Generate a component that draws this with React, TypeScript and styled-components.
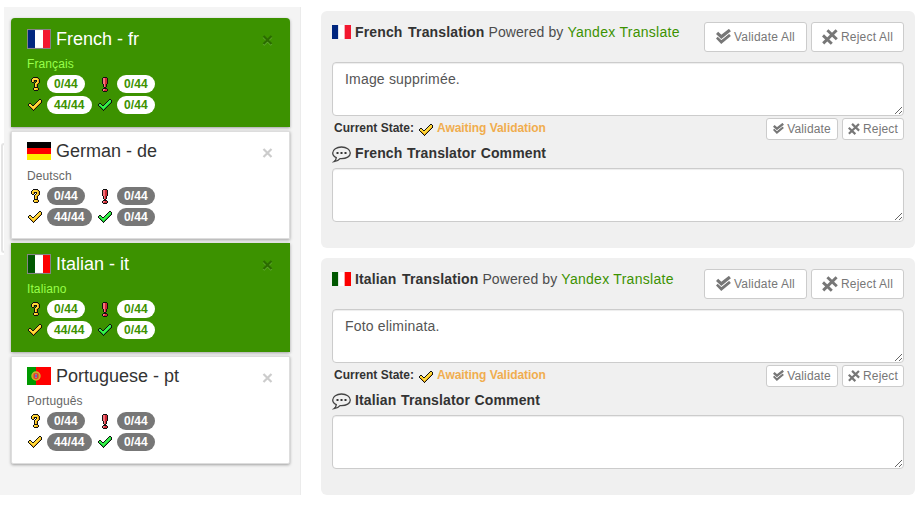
import React from "react";
import styled, { createGlobalStyle } from "styled-components";

const GlobalStyle = createGlobalStyle`
  * { box-sizing: border-box; }
  body { margin: 0; background: #fff; font-family: "Liberation Sans", Arial, sans-serif; color: #333; overflow: hidden; }
  svg { display: block; flex: none; }
`;

const Page = styled.div`
  display: flex;
  align-items: flex-start;
  width: 920px;
  height: 505px;
  padding-top: 7px;
`;
const Gutter = styled.div`
  width: 4px;
  height: 488px;
  padding-top: 136px;
  background: linear-gradient(#fff 248px, #f4f4f4 248px);
`;
const GutterTab = styled.div`
  height: 110px;
  margin-left: 1px;
  border: 2px solid #e4e4e4;
  border-right: 0;
  border-radius: 3px 0 0 3px;
`;
const Sidebar = styled.aside`
  width: 297px;
  height: 488px;
  padding: 11px 10px 0 7px;
  background: #f4f4f4;
  border-right: 1px solid #ebebeb;
  display: flex;
  flex-direction: column;
  gap: 4px;
`;
const Card = styled.section<{ $on: boolean }>`
  width: 279px;
  height: ${(p) => (p.$on ? 109 : 108)}px;
  background: ${(p) => (p.$on ? "#3c9200" : "#fff")};
  border: ${(p) => (p.$on ? "0" : "1px solid #ddd")};
  padding: ${(p) => (p.$on ? "11px 16px 0" : "10px 15px 0")};
  box-shadow: 0 1px 3px rgba(0, 0, 0, 0.35);
  color: ${(p) => (p.$on ? "#fff" : "#333")};
  &:first-child { border-radius: 4px 4px 0 0; }
  &:last-child { border-radius: 0 0 2px 2px; }
`;
const CardHead = styled.div<{ $on: boolean }>`
  display: flex;
  gap: 5px;
  height: ${(p) => (p.$on ? 25 : 24)}px;
  font-size: 18px;
  line-height: 20px;
  span { margin-top: ${(p) => (p.$on ? 0 : -1)}px; }
`;
const Close = styled.button<{ $on: boolean }>`
  margin: 2px 0 0 auto;
  padding: 0;
  width: 12px;
  height: 18px;
  border: 0;
  background: none;
  color: ${(p) => (p.$on ? "#2b6c00" : "#ccc")};
  display: flex;
  align-items: center;
`;
const Native = styled.div<{ $on: boolean }>`
  font-size: 12px;
  line-height: 17px;
  height: 21px;
  padding-top: 2px;
  color: ${(p) => (p.$on ? "#98ff4a" : "#666")};
  letter-spacing: 0.1px;
`;
const Stats = styled.div`
  display: grid;
  grid-template-columns: 70px 70px;
  grid-auto-rows: 21px;
`;
const Stat = styled.div`
  display: flex;
  align-items: flex-start;
`;
const StatIcon = styled.div<{ $indent: number }>`
  width: 20px;
  height: 18px;
  display: flex;
  align-items: center;
  padding-left: ${(p) => p.$indent}px;
`;
const Pill = styled.span<{ $on: boolean }>`
  height: 18px;
  padding: 0 7px;
  min-width: 38px;
  border-radius: 9px;
  font-size: 12px;
  font-weight: bold;
  line-height: 18px;
  letter-spacing: 0.12px;
  background: ${(p) => (p.$on ? "#fff" : "#777")};
  color: ${(p) => (p.$on ? "#3c9200" : "#fff")};
`;

const Main = styled.main`
  display: flex;
  flex-direction: column;
  gap: 10px;
  margin: 4px 0 0 20px;
`;
const Panel = styled.section`
  width: 594px;
  height: 237px;
  padding: 11px;
  background: #f0f0f0;
  border-radius: 6px;
`;
const PanelHead = styled.div`
  display: flex;
  height: 40px;
  font-size: 14px;
  line-height: 20px;
`;
const FlagSlot = styled.div<{ $top: number }>`
  width: 23px;
  padding-top: ${(p) => p.$top}px;
`;
const Title = styled.strong`
  letter-spacing: 0.15px;
  word-spacing: 1.5px;
`;
const CommentTitle = styled.strong`
  letter-spacing: 0.13px;
  word-spacing: 0.6px;
`;
const Powered = styled.span`
  margin-left: 4px;
  color: #4c4c4c;
  letter-spacing: 0.1px;
`;
const Provider = styled.a`
  margin-left: 4px;
  color: #3c9200;
  letter-spacing: 0.28px;
`;
const Buttons = styled.div`
  display: flex;
  gap: 4px;
  margin-left: auto;
`;
const Btn = styled.button<{ $w: number; $small?: boolean }>`
  width: ${(p) => p.$w}px;
  height: ${(p) => (p.$small ? 22 : 30)}px;
  padding: 0 0 1px;
  display: flex;
  align-items: center;
  justify-content: center;
  gap: 3px;
  font: 12px "Liberation Sans", Arial, sans-serif;
  letter-spacing: ${(p) => (p.$small ? 0.15 : 0.2)}px;
  color: #777;
  background: #fff;
  border: 1px solid #ccc;
  border-radius: 3px;
  white-space: nowrap;
`;
const Area = styled.textarea`
  display: block;
  width: 572px;
  height: 54px;
  padding: 6px 12px;
  font: 14px/20px "Liberation Sans", Arial, sans-serif;
  letter-spacing: 0.18px;
  color: #555;
  background: #fff;
  border: 1px solid #ccc;
  border-radius: 4px;
  box-shadow: inset 0 1px 1px rgba(0, 0, 0, 0.075);
  outline: 0;
`;
const StateRow = styled.div`
  display: flex;
  height: 28px;
  padding: 2px 0 0 2px;
  font-size: 12px;
  font-weight: bold;
  line-height: 21px;
`;
const StateIcon = styled.div`
  padding: 6px 4px 0 5px;
`;
const StateText = styled.span`
  color: #f0ad4e;
  letter-spacing: -0.05px;
`;
const CommentHead = styled.div`
  display: flex;
  height: 24px;
  font-size: 14px;
  line-height: 19px;
`;

const ARTS = {
  check: [
    "...........##.",
    "..........#aa#",
    ".........#aaa#",
    "........#aaab#",
    ".##....#aaab#.",
    "#aa#..#aaab#..",
    "#aaa##aaab#...",
    ".#baaaaab#....",
    "..#baaab#.....",
    "...#bab#......",
    "....#b#.......",
    ".....#........",
  ],
  question: [
    "..#####..",
    ".#aaaab#.",
    "#aaaaaab#",
    "#ab###ab#",
    "#ab#.#ab#",
    ".##.#aab#",
    "...#aab#.",
    "...#ab#..",
    "...#ab#..",
    "...#ab#..",
    "...####..",
    "..#aaab#.",
    "..#aabb#.",
    "...####..",
  ],
  bang: [
    ".####.",
    "#aabb#",
    "#aabb#",
    "#aabb#",
    "#aabb#",
    "#aabb#",
    "#aabb#",
    ".#ab#.",
    ".#ab#.",
    ".#ab#.",
    "..##..",
    ".####.",
    "#aabb#",
    "#abbb#",
    ".####.",
  ],
};
const TONES = {
  gold: ["#ffd83a", "#eba712"],
  green: ["#35f04a", "#12c42a"],
  red: ["#f4737b", "#cf2834"],
};
const INDENTS = { check: 1, question: 4, bang: 5 };

function PixelIcon({ art, tone }: { art: keyof typeof ARTS; tone: keyof typeof TONES }) {
  const rows = ARTS[art];
  const fill: Record<string, string> = { "#": "#111", a: TONES[tone][0], b: TONES[tone][1] };
  return (
    <svg width={rows[0].length} height={rows.length} shapeRendering="crispEdges">
      {rows.flatMap((row, y) =>
        [...row].map((c, x) => (c === "." ? null : <rect key={`${x}-${y}`} x={x} y={y} width="1" height="1" fill={fill[c]} />))
      )}
    </svg>
  );
}

type Country = "fr" | "de" | "it" | "pt";

function Flag({ code, width, height, framed }: { code: Country; width: number; height: number; framed?: boolean }) {
  const tri: Partial<Record<Country, string[]>> = {
    fr: ["#00267f", "#fff", "#f31830"],
    it: ["#005700", "#fff", "#fc0000"],
  };
  const cols = tri[code];
  return (
    <svg width={width} height={height} viewBox="0 0 24 18" preserveAspectRatio="none">
      {cols && cols.map((c, i) => <rect key={i} x={i * 8} width="8" height="18" fill={c} />)}
      {code === "de" && (
        <>
          <rect width="24" height="6" fill="#000" />
          <rect y="6" width="24" height="6" fill="#f00" />
          <rect y="12" width="24" height="6" fill="#fe0" />
        </>
      )}
      {code === "pt" && (
        <>
          <rect width="24" height="18" fill="#f00" />
          <rect width="9" height="18" fill="#090" />
          <circle cx="9" cy="9" r="4" fill="#c9762c" stroke="#d0b428" strokeWidth="1.4" />
          <path d="M7 6.5h4v3.500q0 2-2 2.200q-2-.2-2-2.200z" fill="#e33" />
          <rect x="8" y="7.5" width="2" height="3" fill="#b9c6f0" />
          <path d="M9 7.5v3M8 9h2" stroke="#2747a8" strokeWidth=".8" />
        </>
      )}
      {framed && <rect x=".5" y=".45" width="23" height="17.1" fill="none" stroke="#858585" />}
    </svg>
  );
}

function DoubleCheck({ size }: { size: number }) {
  return (
    <svg width={size} height={size} viewBox="0 0 14 14" fill="none">
      <path d="M1 7.800L5 12L13 5.400" stroke="#777" strokeWidth="2.8" />
      <path d="M.6 3.300L5 7.300L13.400.600" stroke="#fff" strokeWidth="4.4" />
      <path d="M1 3.600L5 7.300L13 1" stroke="#777" strokeWidth="3" />
    </svg>
  );
}

function DoubleCross({ size }: { size: number }) {
  return (
    <svg width={size} height={size} viewBox="0 0 16 16" fill="none" stroke="#777" strokeWidth="2.9">
      <path d="M5.400 1.200L14.800 10.200M14.600 1.200L1.200 14.400M1 6.400L9.800 14.800" />
    </svg>
  );
}

function Speech() {
  return (
    <svg width="19" height="17" viewBox="0 0 19 17" fill="none" stroke="#444" strokeWidth="1.3">
      <path d="M4.3 11.6C1.9 10.5.7 8.9.7 7C.7 3.500 4.600 1 9.500 1s8.800 2.500 8.800 6s-3.900 5.700-8.800 5.700l-1.500-.1C6.600 14.300 4.500 15.500 2 15.700C3.500 14.600 4.200 13.300 4.300 11.600z" />
      <path d="M4.500 7h2M8.500 7h2M12.500 7h2" stroke="#333" strokeWidth="2" />
    </svg>
  );
}

function Cross({ on }: { on: boolean }) {
  return (
    <svg width="12" height="12" viewBox="0 0 12 12" fill="none" strokeWidth="2.2">
      {on && <path d="M1.500 3l8 8M9.500 3l-8 8" stroke="#62aa33" />}
      <path d="M1.500 2l8 8M9.500 2l-8 8" stroke="currentColor" />
    </svg>
  );
}

const STATS: [keyof typeof ARTS, keyof typeof TONES, string][] = [
  ["question", "gold", "0/44"],
  ["bang", "red", "0/44"],
  ["check", "gold", "44/44"],
  ["check", "green", "0/44"],
];

function LanguageCard({ code, name, native, on }: { code: Country; name: string; native: string; on: boolean }) {
  return (
    <Card $on={on}>
      <CardHead $on={on}>
        <Flag code={code} width={24} height={on ? 20 : 18} framed={on} />
        <span>{name} - {code}</span>
        <Close $on={on} aria-label="Remove"><Cross on={on} /></Close>
      </CardHead>
      <Native $on={on}>{native}</Native>
      <Stats>
        {STATS.map(([art, tone, value], i) => (
          <Stat key={i}>
            <StatIcon $indent={INDENTS[art]}>
              <PixelIcon art={art} tone={tone} />
            </StatIcon>
            <Pill $on={on}>{value}</Pill>
          </Stat>
        ))}
      </Stats>
    </Card>
  );
}

function TranslationPanel({ code, language, text }: { code: Country; language: string; text: string }) {
  return (
    <Panel>
      <PanelHead>
        <FlagSlot $top={3}><Flag code={code} width={19} height={14} /></FlagSlot>
        <Title>{language} Translation</Title>
        <Powered>Powered by</Powered>
        <Provider>Yandex Translate</Provider>
        <Buttons>
          <Btn $w={103}><DoubleCheck size={15} />Validate All</Btn>
          <Btn $w={93}><DoubleCross size={16} />Reject All</Btn>
        </Buttons>
      </PanelHead>
      <Area defaultValue={text} spellCheck={false} />
      <StateRow>
        <span>Current State:</span>
        <StateIcon><PixelIcon art="check" tone="gold" /></StateIcon>
        <StateText>Awaiting Validation</StateText>
        <Buttons>
          <Btn $w={72} $small><DoubleCheck size={11} />Validate</Btn>
          <Btn $w={62} $small><DoubleCross size={12} />Reject</Btn>
        </Buttons>
      </StateRow>
      <CommentHead>
        <FlagSlot $top={2}><Speech /></FlagSlot>
        <CommentTitle>{language} Translator Comment</CommentTitle>
      </CommentHead>
      <Area spellCheck={false} />
    </Panel>
  );
}

export default function App() {
  return (
    <>
      <GlobalStyle />
      <Page>
        <Gutter><GutterTab /></Gutter>
        <Sidebar>
          <LanguageCard code="fr" name="French" native="Français" on />
          <LanguageCard code="de" name="German" native="Deutsch" on={false} />
          <LanguageCard code="it" name="Italian" native="Italiano" on />
          <LanguageCard code="pt" name="Portuguese" native="Português" on={false} />
        </Sidebar>
        <Main>
          <TranslationPanel code="fr" language="French" text="Image supprimée." />
          <TranslationPanel code="it" language="Italian" text="Foto eliminata." />
        </Main>
      </Page>
    </>
  );
}
